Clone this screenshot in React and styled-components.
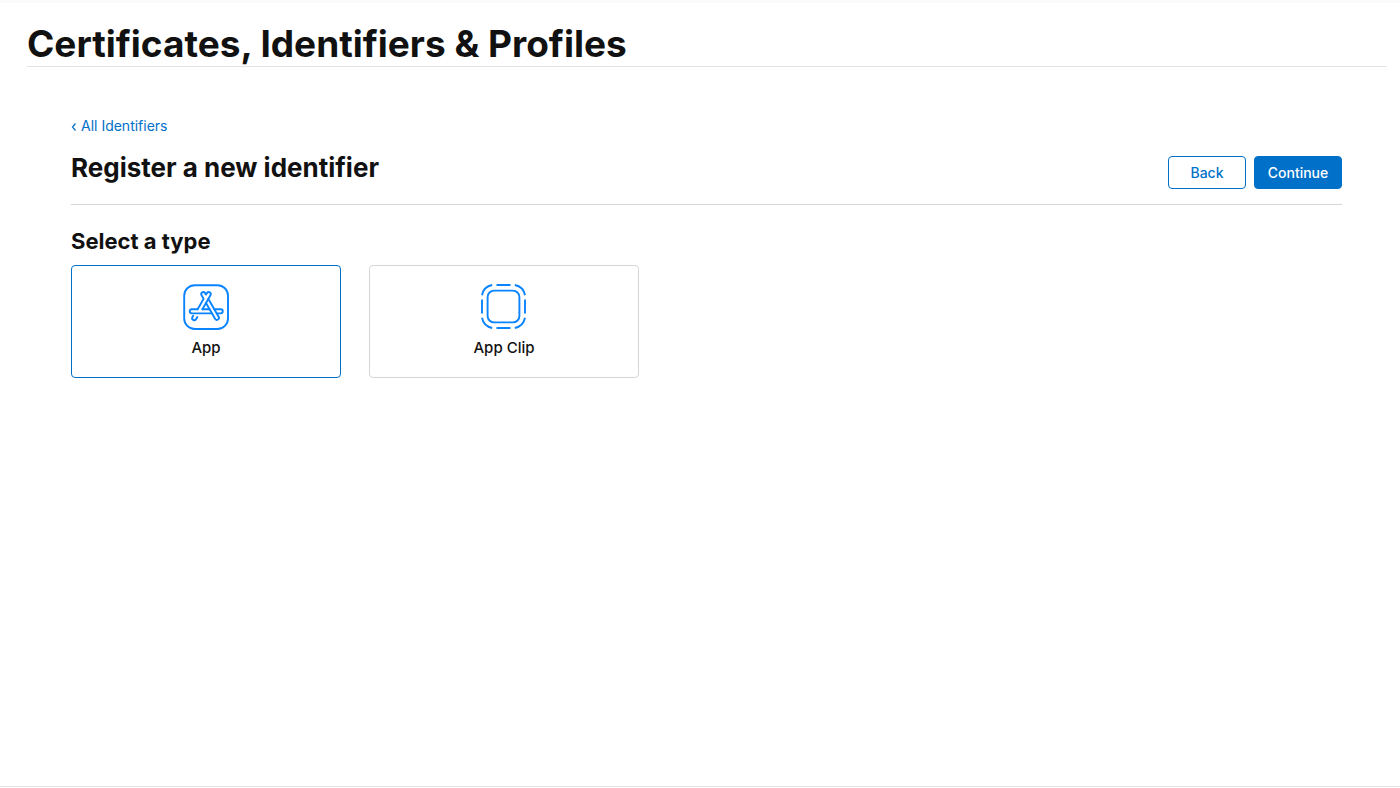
import { useState } from "react";
import styled, { createGlobalStyle } from "styled-components";

const GlobalStyle = createGlobalStyle`
	*, *::before, *::after {
		box-sizing: border-box;
	}

	body {
		margin: 0;
		background: #fff;
		color: #111;
		font-family: Inter, "Liberation Sans", sans-serif;
	}

	h1, h2, h3 {
		margin: 0;
		font-weight: 700;
	}
`;

const Page = styled.div`
	display: flex;
	flex-direction: column;
	min-height: 100vh;
	border-top: 3px solid #fafafa;
`;

const PageHeader = styled.header`
	margin: 0 13px 0 27px;
	padding: 19px 0 0;
	border-bottom: 1px solid #e3e3e3;

	h1 {
		font-size: 37px;
		line-height: 44px;
	}
`;

const Content = styled.main`
	flex: 1;
	padding: 49px 58px 40px 71px;
`;

const BackLink = styled.a`
	display: flex;
	align-items: center;
	gap: 4px;
	width: max-content;
	color: #0070c9;
	font-size: 14px;
	line-height: 20px;
	text-decoration: none;

	&:hover {
		text-decoration: underline;
	}
`;

const Toolbar = styled.div`
	display: flex;
	align-items: flex-start;
	justify-content: space-between;
	padding: 16px 0 15px;
	border-bottom: 1px solid #d6d6d6;

	h2 {
		font-size: 26px;
		line-height: 32px;
	}
`;

const Actions = styled.div`
	display: flex;
	gap: 8px;
	padding-top: 4px;
`;

const Button = styled.button`
	min-width: ${props => (props.$primary ? "88px" : "78px")};
	height: 33px;
	padding: 0 12px;
	border: 1px solid #0070c9;
	border-radius: 4px;
	background: ${props => (props.$primary ? "#0070c9" : "#fff")};
	color: ${props => (props.$primary ? "#fff" : "#0070c9")};
	font-family: inherit;
	font-size: 14px;
	font-weight: 500;
	line-height: 20px;
	cursor: pointer;
`;

const TypeGroup = styled.section`
	padding-top: 22px;

	h3 {
		font-size: 22px;
		line-height: 28px;
	}
`;

const TypeGrid = styled.div`
	display: grid;
	grid-template-columns: repeat(auto-fill, 270px);
	gap: 28px;
	padding-top: 10px;
`;

const TypeCard = styled.label`
	display: flex;
	flex-direction: column;
	align-items: center;
	gap: 6px;
	padding: 18px 16px 17px;
	border: 1px solid ${props => (props.$selected ? "#0070c9" : "#d6d6d6")};
	border-radius: 4px;
	font-size: 15px;
	font-weight: 500;
	line-height: 24px;
	cursor: pointer;

	input {
		position: absolute;
		opacity: 0;
		pointer-events: none;
	}
`;

const Icon = styled.svg`
	display: block;
	width: 46px;
	height: 46px;
	fill: none;
	stroke: #0a84ff;
	stroke-width: 1.9;
	stroke-linecap: round;
	stroke-linejoin: round;
`;

const PageFooter = styled.footer`
	height: 2px;
	border-top: 1px solid #e3e3e3;
`;

const AppIcon = () => (
	<Icon viewBox="0 0 46 46" aria-hidden="true">
		<rect x="1.2" y="1.2" width="43.8" height="43.8" rx="10.5" />
		{/* left stick with the heart-shaped top */}
		<path d="M14.6 25.3L20.6 14.9L18.4 11A2.1 2.1 0 0 1 22 8.9L23 10.6L24 8.9A2.1 2.1 0 0 1 27.6 11L19.4 25.3" />
		{/* right stick */}
		<path d="M23 19L32.2 35A2.1 2.1 0 0 0 35.8 32.9L25.4 14.9" />
		{/* crossbar */}
		<path d="M14.6 25.3H8.8a2.05 2.05 0 0 0 0 4.1H29M19.4 25.3h7.2M31.4 25.3h6.3a2.05 2.05 0 0 1 0 4.1h-3.9" />
		{/* left foot */}
		<path d="M10.2 31.8L9.3 33.3A2.1 2.1 0 0 0 12.9 35.4L14.3 33" />
	</Icon>
);

const AppClipIcon = () => (
	<Icon viewBox="0 0 46 46" aria-hidden="true">
		<rect x="6.6" y="6.6" width="31.8" height="31.8" rx="6.5" />
		<g strokeLinecap="butt">
			<path d="M15.5 1h14M15.5 44h14M1 15.5v14M44 15.5v14" />
			<path d="M1 11.2C2 6 6 2 11.2 1M33.8 1C39 2 43 6 44 11.2M44 33.8C43 39 39 43 33.8 44M11.2 44C6 43 2 39 1 33.8" />
		</g>
	</Icon>
);

const Chevron = styled.svg`
	width: 6px;
	height: 10px;
	fill: none;
	stroke: currentColor;
	stroke-width: 1.2;
`;

const TYPES = [
	{ id: "app", label: "App", Glyph: AppIcon },
	{ id: "clip", label: "App Clip", Glyph: AppClipIcon }
];

const App = () => {
	const [type, setType] = useState("app");

	return (
		<Page>
			<GlobalStyle />
			<PageHeader>
				<h1>Certificates, Identifiers &amp; Profiles</h1>
			</PageHeader>
			<Content>
				<BackLink href="#identifiers">
					<Chevron viewBox="0 0 6 10" aria-hidden="true">
						<path d="M4.5 2.5L1.5 6l3 3.5" />
					</Chevron>
					All Identifiers
				</BackLink>
				<Toolbar>
					<h2>Register a new identifier</h2>
					<Actions>
						<Button type="button">Back</Button>
						<Button type="button" $primary>
							Continue
						</Button>
					</Actions>
				</Toolbar>
				<TypeGroup>
					<h3 id="type-heading">Select a type</h3>
					<TypeGrid role="radiogroup" aria-labelledby="type-heading">
						{TYPES.map(({ id, label, Glyph }) => (
							<TypeCard key={id} $selected={type === id}>
								<input
									type="radio"
									name="type"
									value={id}
									checked={type === id}
									onChange={() => setType(id)}
								/>
								<Glyph />
								{label}
							</TypeCard>
						))}
					</TypeGrid>
				</TypeGroup>
			</Content>
			<PageFooter />
		</Page>
	);
};

export default App;
